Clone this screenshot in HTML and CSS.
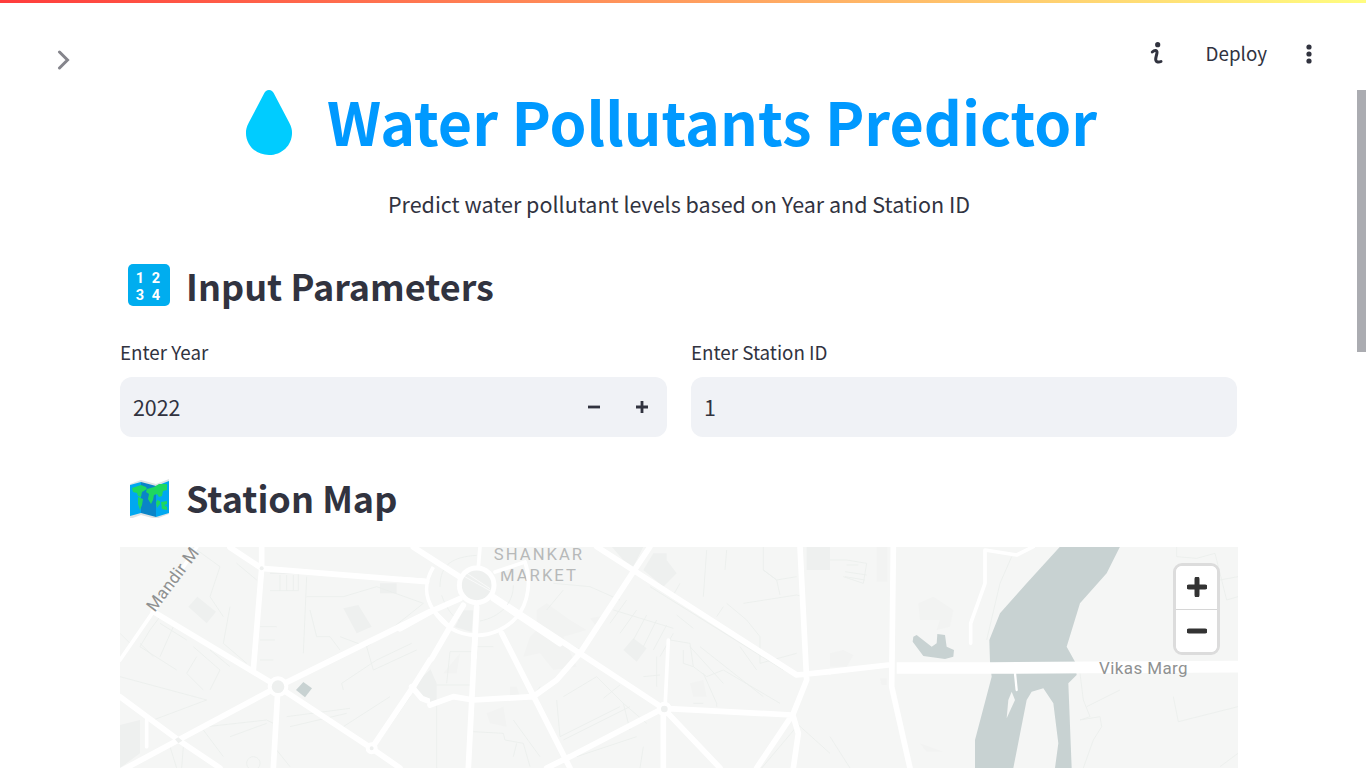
FILE: index.html
```html
<!DOCTYPE html>
<html lang="en">
<head>
<meta charset="utf-8">
<title>Water Pollutants Predictor</title>
<link rel="stylesheet" href="styles.css">
</head>
<body>
<div class="app">
  <div class="deco"></div>
  <header class="header">
    <button class="expand" aria-label="Expand sidebar">
      <svg width="14" height="20" viewBox="0 0 14 20"><path class="chev" d="M2.500 2 10.500 10l-8 8"/></svg>
    </button>
    <div class="toolbar">
      <svg class="info" width="16" height="26" viewBox="0 0 16 26"><circle cx="9.700" cy="3.700" r="2.600"/><path d="M4.300 11C6 9.500 9.300 8.500 9 11.500 8.800 14 7.500 16.500 7.700 18.700 8 21.500 11 21.500 13 20.500"/></svg>
      <span class="deploy">Deploy</span>
      <svg class="dots" width="8" height="24" viewBox="0 0 8 24"><circle cx="4" cy="5" r="2.600"/><circle cx="4" cy="12" r="2.600"/><circle cx="4" cy="19" r="2.600"/></svg>
    </div>
  </header>
  <main class="main">
    <div class="thumb"></div>
    <h1 class="title">
      <svg class="drop" width="48" height="67" viewBox="0 0 50 66" preserveAspectRatio="none"><path d="M25 1c-2.500 0-4 1.500-5 3.300L4 33C1.600 37.500 1 40 1 43c0 12.500 10.500 22 24 22s24-9.500 24-22c0-3-.6-5.500-3-10L30 4.300C29 2.500 27.500 1 25 1z"/></svg>
      <span class="titletext">Water Pollutants Predictor</span>
    </h1>
    <p class="subtitle">Predict water pollutant levels based on Year and Station ID</p>
    <h2 class="heading">
      <svg class="emoji" width="42" height="42" viewBox="0 0 42 42">
        <rect class="key" width="42" height="42" rx="5"/>
        <text class="keytext" x="12" y="18.500">1</text><text class="keytext" x="28" y="18.500">2</text>
        <text class="keytext" x="12" y="35.500">3</text><text class="keytext" x="28" y="35.500">4</text>
      </svg>
      <span>Input Parameters</span>
    </h2>
    <div class="fields">
      <label class="field">
        <span class="label">Enter Year</span>
        <span class="input">
          <span class="value">2022</span>
          <svg class="step" width="14" height="14" viewBox="0 0 14 14"><path d="M1 7h12"/></svg>
          <svg class="step plus" width="14" height="14" viewBox="0 0 14 14"><path d="M1 7h12M7 1v12"/></svg>
        </span>
      </label>
      <label class="field">
        <span class="label">Enter Station ID</span>
        <span class="input"><span class="value">1</span></span>
      </label>
    </div>
    <h2 class="heading second">
      <svg class="emoji" width="42" height="42" viewBox="0 0 42 42">
        <path class="mapedge" d="M2 8 13 4l15 4 13-5v35l-13 5-15-4-11 4z"/>
        <path class="mapa" d="M2 9l11-3v31L2 40z"/>
        <path class="mapb" d="M13 6l15 4v31l-15-4z"/>
        <path class="mapa" d="M28 10l13-5v32l-13 4z"/>
        <path class="mapg" d="M4 12l9-3 5 2 1 2-5 3-1 5-3-1-1-3-4-1zM10 21l5 2-1 6-2 5-2-6zM19 13l7-2 5-3 8 0v6l-4 1-1 5-3 1-2-3-3 1-1 5-2 4-3-5 1-5-3-2zM29 24l3 1v3l-3 4-1-5zM33 26l6-1v3l-3 1 3 2v3l-5-1z"/>
      </svg>
      <span>Station Map</span>
    </h2>
    <div class="map">
      <svg class="mapsvg" width="1118" height="221" viewBox="120 547 1118 221">
        <rect class="land" x="120" y="547" width="1118" height="221"/>

        <g transform="translate(110 470) scale(.33333)">
          <path class="block" d="M235 410 262 380 318 425 290 460zM700 415 745 405 785 470 740 490zM810 340H860V370H810zM30 765 90 750V850L30 894zM915 640 960 600V690L930 680z"/>
          <path class="water" d="M558 660 580 636 606 655 585 682z"/>
          <path class="minor" d="M250 232 330 290 300 380 340 440M380 280 440 330M480 310H565V362H480M510 315V362M530 315V362M550 315V362M590 320 580 550M590 380 700 380 800 350 940 400 840 480 770 530 690 500M600 420 620 500 660 500M660 500 690 540M450 470H500M450 510H495M450 570H490M360 410 340 520 410 580M150 440 120 480 90 530 200 600M190 470 150 560M250 530 330 600 300 660M260 560 230 610 280 660M300 540 360 590M90 520 130 560M30 490 60 520M30 620 290 690 130 750M150 460 230 510M700 660 695 640 800 570 905 520M770 530 790 600 920 540M700 770 840 680M290 770 470 750 490 760M280 780 340 860M530 740 720 715M540 770 710 730M360 800 470 760M500 840 540 890M430 860a20 20 0 1 0 .1 0M180 830 200 894M220 830 215 894M810 810 900 680"/>
          <path class="road" d="M360 232 455 295 950 335M455 232 455 295 430 600M130 425 504 650 785 835 910 650 960 570M504 650 960 425M504 650 490 894M504 650 205 810 0 920M30 680 205 810 330 894M785 835 870 894M905 650 935 685 960 695"/>
          <path class="road mid" d="M30 570 130 425 260 232M110 750 110 830"/>
          <circle class="hub" cx="504" cy="650" r="25"/>
          <circle class="hub" cx="785" cy="835" r="12"/>
          <circle class="hubs" cx="455" cy="295" r="6"/>
          <path class="block" d="M195 808 205 802 217 812 205 820z"/>
          <text class="maplabel" transform="translate(134 428) rotate(-53) scale(3)">Mandir M</text>
        </g>

        <g transform="translate(430 540) scale(.33333)">
          <path class="block" d="M545 20H640L610 80 580 60zM640 90 670 40H710V60L740 100 700 140zM580 330 610 295 650 325 620 365zM1130 20H1200V90H1130zM0 385 20 430V480L0 490z"/>
          <path class="blockf" d="M320 210 350 190 420 240 470 270 400 290 440 380 370 390 330 340 280 350 300 290 320 270zM480 235 530 225 500 260zM170 520 220 500 230 560 180 550zM780 430 820 420 830 470 790 470zM240 440 260 440 270 470 240 465zM40 400 90 340 80 400z"/>
          <path class="minor" d="M550 210 730 265M590 180 540 250M620 210 570 280M650 225 610 300M680 240 640 320M710 255 670 330M730 280 690 350M740 225 790 265M720 300 780 310 790 380 830 410 880 390 1050 490M780 320 880 430M810 320 1000 470M660 140 1060 390M750 130 730 165M880 200 860 230M990 290 990 370 1100 340M940 190 1100 165 1120 170M890 190 950 240 990 290M1000 90 1040 120 1100 110M830 30 820 170M890 30 885 90M1000 20 1000 90 1040 120 1050 165M930 320 980 390M370 130 480 140 570 180M400 150 350 210M310 250 450 330M330 440 310 470M400 470 500 410 580 490 650 550M570 435 520 475M380 480 390 590 570 500M400 600 600 500M580 490 600 570M440 650 620 590M640 620 630 684M250 540 330 650M130 575 220 580 225 600 280 610 300 680M60 335H130M60 335 50 430M20 435H120M20 480V684M130 320H190M260 610 250 650M760 330 760 370 790 380M680 350 680 440M640 410 690 405M820 400 860 490 860 500M790 490H820M1100 550 1200 640M990 690 1100 560"/>
          <path class="road" d="M190 170 450 340 700 505M500 20 1100 405 1200 395M660 20 610 95 450 340 380 420 310 470 130 480 70 470 0 495M700 505 1085 525M700 505V684M700 505 870 684M700 505 420 650 350 684M215 280 420 684M135 290 115 684M1110 20 1130 420 1090 520 980 684M1090 530 1105 580 1090 684"/>
          <path class="road mid" d="M715 300 705 505"/>
          <circle class="hub" cx="703" cy="507" r="16"/>
          <text class="district" x="327" y="60" text-anchor="middle">SHANKAR</text>
          <text class="district" x="327" y="124" text-anchor="middle">MARKET</text>
        </g>

        <g transform="translate(400 547) scale(.33333)">
          <path class="block" d="M190 190 220 190 215 255 165 240z"/>
          <path class="minor" d="M120 120C120 50 160 30 230 25M340 115C340 170 300 210 240 222M125 145C140 190 165 215 180 222"/>
          <path class="ring" d="M375 45C395 100 385 170 350 210 320 245 275 265 230 265 180 265 135 245 100 190 75 150 70 110 100 60"/>
          <path class="road" d="M40 0 180 90M180 155 100 190 0 245M190 175 150 240 95 335M230 180 222 330M280 155 480 290"/>
          <path class="road mid" d="M240 0 235 60M285 75 375 45M150 240 100 190M0 95 75 100"/>
          <circle class="hub big" cx="230" cy="115" r="52"/>
          <path class="cross" d="M187 85 277 135M195 75 270 125"/>
        </g>

        <g transform="translate(830 540) scale(.33333)">
          <path class="blockf" d="M140 20H172V125H140zM265 190 310 170 370 210 360 260 320 270 330 240 270 240zM0 340 40 330 70 345 50 380 0 380zM270 610 340 635H290zM150 415H170V435H155z"/>
          <path class="minor" d="M0 60 50 60 110 70 100 130 40 110M50 75 85 75M45 95 110 105M45 110 105 120M545 50 510 130 470 300M1040 20V50L1100 55 1155 40 1190 180 1224 170M1170 120 1224 110M750 400 760 480 780 530 750 540 810 530 815 560 790 600 760 684M770 500 870 450M1030 470 1045 545 1224 500M0 590 60 684M1224 640 1170 680"/>
          <path class="water" d="M690 20H870L830 100 750 190 710 320 735 365 740 405 715 430 725 684H675L685 610 670 490 640 445 605 455 590 480 550 684H435V600L485 410 480 365 478 300 510 220 590 130zM250 290 260 285 305 320 320 310 322 282 345 285 350 320 372 330 370 350 345 357 280 348 248 305z"/>
          <path class="land" d="M545 455 555 480 530 535 535 480z"/>
          <path class="road thin" d="M555 400 560 450"/>
          <path class="road" d="M190 20 185 440 240 684"/>
          <path class="road mid" d="M465 30V130L422 250V310M465 30 560 45 610 20"/>
          <path class="road wide" d="M200 384H300L480 384 780 382 1224 380"/>
          <path class="road" d="M0 395 175 375"/>
          <text class="maplabel dark" transform="translate(807 402) scale(3)">Vikas Marg</text>
        </g>
      </svg>
      <div class="zoomctl">
        <button class="zoombtn" aria-label="Zoom in"><svg width="20" height="20" viewBox="0 0 20 20"><path d="M2 10h16M10 2v16"/></svg></button>
        <button class="zoombtn" aria-label="Zoom out"><svg width="20" height="20" viewBox="0 0 20 20"><path d="M2 10h16"/></svg></button>
      </div>
    </div>
  </main>
</div>
</body>
</html>
```
FILE: styles.css
```css
* { box-sizing: border-box; }
html, body { margin: 0; height: 100%; overflow: hidden; background: #fff; }
body { font-family: "Noto Sans CJK SC", "Noto Sans", sans-serif; color: #31333f; }
.app { display: flex; flex-direction: column; height: 768px; overflow: hidden; }
.deco { height: 3px; flex: none; background: linear-gradient(90deg, rgb(255, 60, 60), rgb(255, 253, 128)); }
.header { height: 87px; flex: none; display: flex; align-items: flex-start; justify-content: space-between; padding: 38px 0 0 57px; }
.expand { border: 0; padding: 0; background: none; margin-top: 9px; display: block; }
.chev { fill: none; stroke: #85858c; stroke-width: 3; stroke-linecap: round; stroke-linejoin: miter; }
.toolbar { display: flex; align-items: center; height: 26px; padding-right: 53px; }
.info { margin-right: 42px; }
.info circle, .dots circle { fill: #31333f; }
.info path { fill: none; stroke: #31333f; stroke-width: 3; stroke-linecap: round; }
.deploy { font-size: 18.800px; line-height: 26px; margin-right: 38px; padding-bottom: 2px; }
.main { position: relative; flex: 1; min-height: 0; padding: 0 128px 0 120px; }
.thumb { position: absolute; right: 0; top: 0; width: 9px; height: 262px; background: #abacb1; }
.title { margin: 0; display: flex; align-items: center; justify-content: center; height: 68px; font-size: 59.200px; line-height: 68px; font-weight: 700; color: #0099ff; padding-right: 16px; white-space: nowrap; }
.titletext { padding-bottom: 8px; }
.drop { margin-right: 34px; margin-bottom: 3px; fill: #00ccff; flex: none; }
.subtitle { margin: 29px 0 0; font-size: 21.500px; line-height: 34px; text-align: center; }
.heading { margin: 38px 0 0; display: flex; align-items: center; height: 52px; font-size: 36px; line-height: 52px; font-weight: 700; padding-left: 8px; }
.heading .emoji { margin-right: 16px; flex: none; }
.heading.second { margin-top: 34px; }
.key { fill: #00adef; }
.keytext { font-family: "Roboto", sans-serif; font-size: 14.500px; font-weight: 700; fill: #fff; text-anchor: middle; }
.mapedge { fill: #dfe3e5; }
.mapa { fill: #00a8f0; }
.mapb { fill: #0a84c8; }
.mapg { fill: #1ed760; }
.fields { display: grid; grid-template-columns: 547px 546px; gap: 24px; margin-top: 27px; }
.field { display: flex; flex-direction: column; }
.label { font-size: 18.800px; line-height: 28px; margin-bottom: 11px; }
.input { height: 60px; display: flex; align-items: center; background: #f0f2f6; border-radius: 12px; padding: 0 18px 0 13px; }
.value { flex: 1; font-size: 21.400px; padding-bottom: 2px; }
.step { fill: none; stroke: #31333f; stroke-width: 2.800; }
.step.plus { margin-left: 34px; }
.map { position: relative; width: 1118px; height: 221px; margin-top: 24px; overflow: hidden; }
.mapsvg { display: block; }
.land { fill: #f5f6f5; }
.block { fill: #eef0ef; }
.blockf { fill: #f2f3f2; }
.water { fill: #c8d2d2; }
.minor { fill: none; stroke: #ebeeec; stroke-width: 2.500; }
.road { fill: none; stroke: #fff; stroke-width: 17; stroke-linecap: round; stroke-linejoin: round; }
.road.mid { stroke-width: 11; }
.road.thin { stroke-width: 7; }
.road.wide { stroke-width: 35; stroke-linecap: butt; }
.ring { fill: none; stroke: #fff; stroke-width: 11; }
.hub { fill: #eef0ef; stroke: #fff; stroke-width: 12; }
.hub.big { stroke-width: 15; }
.hubs { fill: #eef0ef; }
.cross { fill: none; stroke: #fff; stroke-width: 2; }
.maplabel { font-family: "Roboto", sans-serif; font-size: 17px; fill: #8f9191; letter-spacing: .4px; }
.district { font-family: "Roboto", sans-serif; font-size: 50px; fill: #b7b9b9; letter-spacing: 6px; }
.zoomctl { position: absolute; top: 16px; right: 18px; width: 47px; height: 92px; background: #fff; border: 3px solid #dcdcdc; border-radius: 9px; display: flex; flex-direction: column; overflow: hidden; }
.zoombtn { flex: 1; border: 0; padding: 0; background: #fff; display: flex; align-items: center; justify-content: center; }
.zoombtn + .zoombtn { border-top: 1px solid #d6d6d6; }
.zoombtn path { fill: none; stroke: #333; stroke-width: 5; stroke-linecap: round; }
```
